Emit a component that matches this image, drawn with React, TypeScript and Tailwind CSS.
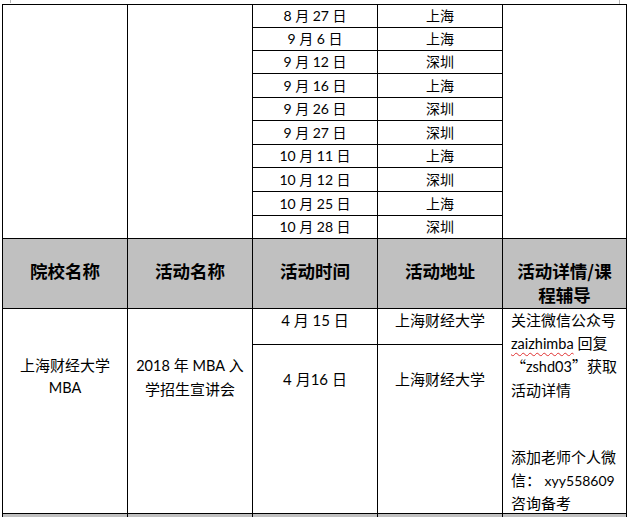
import React from "react";

const dates: [string, string, number][] = [
  ["8 月 27 日", "上海", 23],
  ["9 月 6 日", "上海", 23],
  ["9 月 12 日", "深圳", 23],
  ["9 月 16 日", "上海", 24],
  ["9 月 26 日", "深圳", 23],
  ["9 月 27 日", "深圳", 24],
  ["10 月 11 日", "上海", 23],
  ["10 月 12 日", "深圳", 24],
  ["10 月 25 日", "上海", 24],
  ["10 月 28 日", "深圳", 23],
];

function SmallCell({ text, h }: { text: string; h: number }) {
  return (
    <div
      className={`${h === 23 ? "h-[23px]" : "h-[24px]"} border-b border-black flex items-center justify-center text-[14px] leading-none whitespace-pre`}
    >
      {text}
    </div>
  );
}

const headers = ["院校名称", "活动名称", "活动时间", "活动地址"];

export default function App() {
  return (
    <div className="relative w-[630px] h-[517px] overflow-hidden bg-white text-black font-['Lato','Noto_Sans_CJK_SC',sans-serif]">
      <div className="absolute left-[10px] top-0 w-px h-[3px] bg-[#b8b8b8]" />
      <div className="absolute left-[619px] top-0 w-px h-[4px] bg-[#b8b8b8]" />
      <div className="ml-[2px] mt-[4px] w-[625px]">
        {/* top section */}
        <div className="flex border-l border-t border-black">
          <div className="w-[125px] border-r border-b border-black" />
          <div className="w-[125px] border-r border-b border-black" />
          <div className="w-[125px] border-r border-black flex flex-col">
            {dates.map(([d, , h], i) => (
              <SmallCell key={i} text={d} h={h} />
            ))}
          </div>
          <div className="w-[125px] border-r border-black flex flex-col">
            {dates.map(([, p, h], i) => (
              <SmallCell key={i} text={p} h={h} />
            ))}
          </div>
          <div className="w-[124px] border-r border-b border-black" />
        </div>

        {/* header row */}
        <div className="flex border-l border-black bg-[#c0c0c0]">
          {headers.map((t) => (
            <div
              key={t}
              className="w-[125px] h-[70px] border-r border-b border-black pt-[20px] text-center text-[17.5px] leading-[24px] font-bold font-['Noto_Sans_CJK_SC',sans-serif]"
            >
              {t}
            </div>
          ))}
          <div className="w-[124px] h-[70px] border-r border-b border-black pt-[20px] text-center text-[17.5px] leading-[24px] font-bold font-['Noto_Sans_CJK_SC',sans-serif]">
            活动详情/课
            <br />
            程辅导
          </div>
        </div>

        {/* body row */}
        <div className="flex border-l border-black text-[15px] leading-[22.5px]">
          <div className="w-[125px] h-[205px] border-r border-b border-black pt-[45px] text-center">
            <div>上海财经大学</div>
            <div className="text-[14.5px]">MBA</div>
          </div>
          <div className="w-[125px] h-[205px] border-r border-b border-black pt-[45px] text-center">
            <div>
              <span className="text-[14.5px]">2018</span> 年 <span className="text-[14.5px]">MBA</span> 入
            </div>
            <div>学招生宣讲会</div>
          </div>
          <div className="w-[125px] h-[205px] border-r border-black flex flex-col">
            <div className="h-[36px] border-b border-black text-center">4 月 15 日</div>
            <div className="h-[169px] border-b border-black pt-[23px] text-center">4 月16 日</div>
          </div>
          <div className="w-[125px] h-[205px] border-r border-black flex flex-col">
            <div className="h-[36px] border-b border-black text-center">上海财经大学</div>
            <div className="h-[169px] border-b border-black pt-[23px] text-center">上海财经大学</div>
          </div>
          <div className="w-[124px] h-[205px] border-r border-b border-black pl-[8px] whitespace-nowrap">
            <div>关注微信公众号</div>
            <div>
              <span className="text-[14.5px] underline decoration-wavy decoration-[#e03030] decoration-1 underline-offset-[3px]">zaizhimba</span> 回复
            </div>
            <div>
              <span className="font-['Noto_Sans_CJK_SC',sans-serif]">“</span>
              <span className="text-[14.5px]">zshd03</span>
              <span className="font-['Noto_Sans_CJK_SC',sans-serif]">”</span>获取
            </div>
            <div>活动详情</div>
            <div className="h-[22.5px]" />
            <div className="h-[22.5px]" />
            <div>添加老师个人微</div>
            <div>
              信：<span className="text-[14px]"> xyy558609</span>
            </div>
            <div>咨询备考</div>
          </div>
        </div>

        {/* next header row start */}
        <div className="flex border-l border-black bg-[#c0c0c0]">
          <div className="w-[125px] h-[6px] border-r border-black" />
          <div className="w-[125px] h-[6px] border-r border-black" />
          <div className="w-[125px] h-[6px] border-r border-black" />
          <div className="w-[125px] h-[6px] border-r border-black" />
          <div className="w-[124px] h-[6px] border-r border-black" />
        </div>
      </div>
    </div>
  );
}
